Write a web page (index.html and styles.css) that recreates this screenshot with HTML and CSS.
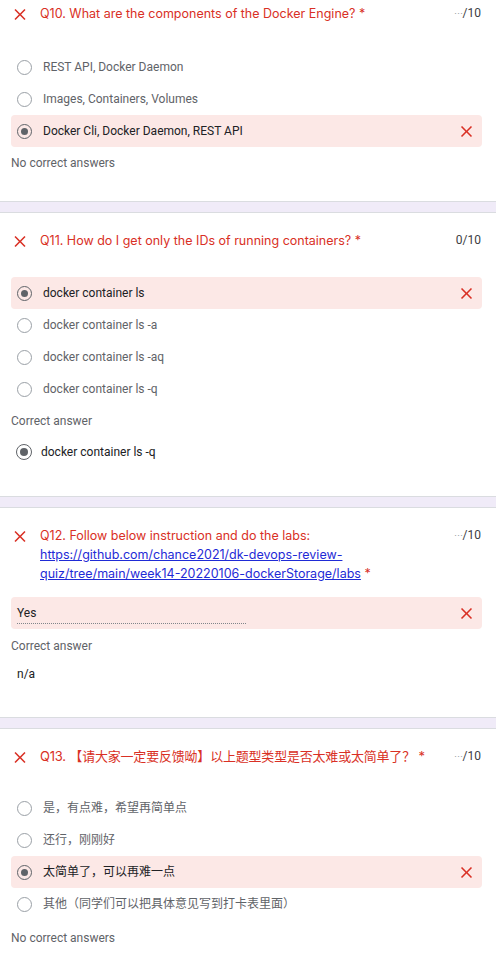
FILE: index.html
```html
<!DOCTYPE html>
<html lang="en">
<head>
<meta charset="utf-8">
<title>Quiz results</title>
<link rel="stylesheet" href="styles.css">
</head>
<body>
<main class="page">

  <section class="card card--clipped">
    <div class="qhead">
      <svg class="xicon" viewBox="0 0 24 24"><path d="M19 6.41L17.59 5 12 10.59 6.41 5 5 6.41 10.59 12 5 17.59 6.41 19 12 13.41 17.59 19 19 17.59 13.41 12z"/></svg>
      <div class="qtitle">Q10. What are the components of the Docker Engine? <span class="req">*</span></div>
      <div class="score"><span class="dots">⋯</span>/10</div>
    </div>
    <div class="opts">
      <div class="opt"><span class="radio"></span><span class="otext">REST API, Docker Daemon</span></div>
      <div class="opt"><span class="radio"></span><span class="otext">Images, Containers, Volumes</span></div>
      <div class="opt opt--wrong"><span class="radio radio--on"></span><span class="otext otext--sel">Docker Cli, Docker Daemon, REST API</span>
        <svg class="xicon xicon--end" viewBox="0 0 24 24"><path d="M19 6.41L17.59 5 12 10.59 6.41 5 5 6.41 10.59 12 5 17.59 6.41 19 12 13.41 17.59 19 19 17.59 13.41 12z"/></svg></div>
    </div>
    <div class="label label--first">No correct answers</div>
  </section>

  <div class="sep"></div>

  <section class="card">
    <div class="qhead">
      <svg class="xicon" viewBox="0 0 24 24"><path d="M19 6.41L17.59 5 12 10.59 6.41 5 5 6.41 10.59 12 5 17.59 6.41 19 12 13.41 17.59 19 19 17.59 13.41 12z"/></svg>
      <div class="qtitle">Q11. How do I get only the IDs of running containers? <span class="req">*</span></div>
      <div class="score">0/10</div>
    </div>
    <div class="opts">
      <div class="opt opt--wrong"><span class="radio radio--on"></span><span class="otext otext--sel">docker container ls</span>
        <svg class="xicon xicon--end" viewBox="0 0 24 24"><path d="M19 6.41L17.59 5 12 10.59 6.41 5 5 6.41 10.59 12 5 17.59 6.41 19 12 13.41 17.59 19 19 17.59 13.41 12z"/></svg></div>
      <div class="opt"><span class="radio"></span><span class="otext">docker container ls -a</span></div>
      <div class="opt"><span class="radio"></span><span class="otext">docker container ls -aq</span></div>
      <div class="opt"><span class="radio"></span><span class="otext">docker container ls -q</span></div>
    </div>
    <div class="label label--first">Correct answer</div>
    <div class="opt opt--answer"><span class="radio radio--on radio--big"></span><span class="otext otext--sel">docker container ls -q</span></div>
  </section>

  <div class="sep"></div>

  <section class="card">
    <div class="qhead">
      <svg class="xicon" viewBox="0 0 24 24"><path d="M19 6.41L17.59 5 12 10.59 6.41 5 5 6.41 10.59 12 5 17.59 6.41 19 12 13.41 17.59 19 19 17.59 13.41 12z"/></svg>
      <div class="qtitle">Q12. Follow below instruction and do the labs:<br><a class="link" href="#">https://github.com/chance2021/dk-devops-review-<br>quiz/tree/main/week14-20220106-dockerStorage/labs</a> <span class="req">*</span></div>
      <div class="score"><span class="dots">⋯</span>/10</div>
    </div>
    <div class="short">
      <span class="short-text">Yes</span>
      <svg class="xicon xicon--end" viewBox="0 0 24 24"><path d="M19 6.41L17.59 5 12 10.59 6.41 5 5 6.41 10.59 12 5 17.59 6.41 19 12 13.41 17.59 19 19 17.59 13.41 12z"/></svg>
    </div>
    <div class="label">Correct answer</div>
    <div class="plain">n/a</div>
  </section>

  <div class="sep"></div>

  <section class="card">
    <div class="qhead">
      <svg class="xicon" viewBox="0 0 24 24"><path d="M19 6.41L17.59 5 12 10.59 6.41 5 5 6.41 10.59 12 5 17.59 6.41 19 12 13.41 17.59 19 19 17.59 13.41 12z"/></svg>
      <div class="qtitle qtitle--cjk">Q13. 【请大家一定要反馈呦】以上题型类型是否太难或太简单了？ <span class="req">*</span></div>
      <div class="score"><span class="dots">⋯</span>/10</div>
    </div>
    <div class="opts opts--tight">
      <div class="opt"><span class="radio"></span><span class="otext">是，有点难，希望再简单点</span></div>
      <div class="opt"><span class="radio"></span><span class="otext">还行，刚刚好</span></div>
      <div class="opt opt--wrong"><span class="radio radio--on"></span><span class="otext otext--sel">太简单了，可以再难一点</span>
        <svg class="xicon xicon--end" viewBox="0 0 24 24"><path d="M19 6.41L17.59 5 12 10.59 6.41 5 5 6.41 10.59 12 5 17.59 6.41 19 12 13.41 17.59 19 19 17.59 13.41 12z"/></svg></div>
      <div class="opt"><span class="radio"></span><span class="otext">其他（同学们可以把具体意见写到打卡表里面）</span></div>
    </div>
    <div class="label label--last">No correct answers</div>
  </section>

</main>
</body>
</html>
```

FILE: styles.css
```css
* { box-sizing: border-box; }

html, body {
  margin: 0;
  padding: 0;
  background: #ffffff;
}

body {
  font-family: Roboto, "Noto Sans CJK SC", sans-serif;
  font-size: 12px;
  color: #202124;
}

.page {
  display: flex;
  flex-direction: column;
}

.card {
  padding: 18px 0 28px 0;
  background: #ffffff;
}

.card--clipped {
  padding-top: 4px;
}

.sep {
  height: 12px;
  background: #f0ebf8;
  border-top: 1px solid #dadce0;
  border-bottom: 1px solid #dadce0;
}

.qhead {
  display: flex;
  align-items: flex-start;
  height: auto;
  padding: 0 15px 0 10px;
  gap: 10px;
}

.xicon {
  width: 19px;
  height: 19px;
  fill: #d93025;
  flex: 0 0 19px;
}

.qhead .xicon {
  width: 20px;
  height: 19px;
  flex-basis: 20px;
  margin-top: 1px;
  margin-bottom: -1px;
}

.qtitle {
  flex: 1;
  font-family: Inter, "Noto Sans CJK SC", sans-serif;
  font-size: 12.5px;
  line-height: 19px;
  color: #d93025;
}

.qtitle--cjk {
  font-size: 13px;
  letter-spacing: -0.2px;
  height: 19px;
}

.req {
  color: #d93025;
}

.link {
  color: #1f2bd6;
  text-decoration: underline;
}

.score {
  font-family: Roboto, sans-serif;
  font-size: 12px;
  line-height: 19px;
  color: #3c4043;
  margin-left: 12px;
  white-space: nowrap;
}

.dots {
  color: #9aa0a6;
  font-size: 9px;
  letter-spacing: -1px;
  margin-right: 1px;
}

.opts {
  margin-top: 27px;
  display: flex;
  flex-direction: column;
}

.opts--tight {
  margin-top: 25px;
}

.opt {
  display: flex;
  align-items: center;
  height: 32px;
  margin: 0 14px 0 11px;
  padding: 0 6px;
  gap: 11px;
  border-radius: 4px;
}

.opt--wrong {
  background: #fce8e6;
}

.opt--answer {
  margin-top: 5px;
  padding-left: 5px;
  gap: 9px;
}

.radio {
  width: 15px;
  height: 15px;
  flex: 0 0 15px;
  border-radius: 50%;
  border: 1.5px solid #9aa0a6;
  display: flex;
  align-items: center;
  justify-content: center;
}

.radio--on {
  border-color: #5f6368;
}

.radio--on::after {
  content: "";
  width: 7px;
  height: 7px;
  border-radius: 50%;
  background: #5f6368;
}

.radio--big {
  width: 16px;
  height: 16px;
  flex-basis: 16px;
}

.radio--big::after {
  width: 8px;
  height: 8px;
}

.otext {
  color: #5f6368;
  font-size: 12px;
  line-height: 16px;
  white-space: nowrap;
}

.otext--sel {
  color: #202124;
}

.xicon--end {
  margin-left: auto;
}

.label {
  margin: 7px 0 0 11px;
  line-height: 20px;
  font-size: 12px;
  color: #5f6368;
}

.label--first {
  margin-top: 6px;
}

.label--last {
  margin-top: 8px;
}

.short {
  display: flex;
  align-items: center;
  height: 32px;
  margin: 14px 14px 0 11px;
  padding: 0 6px;
  border-radius: 4px;
  background: #fce8e6;
}

.short-text {
  width: 229px;
  line-height: 19px;
  margin-top: 1px;
  border-bottom: 1px dotted #80868b;
  color: #202124;
}

.plain {
  display: flex;
  align-items: center;
  height: 31px;
  margin: 2px 0 0 11px;
  padding-left: 6px;
  color: #202124;
}
```
